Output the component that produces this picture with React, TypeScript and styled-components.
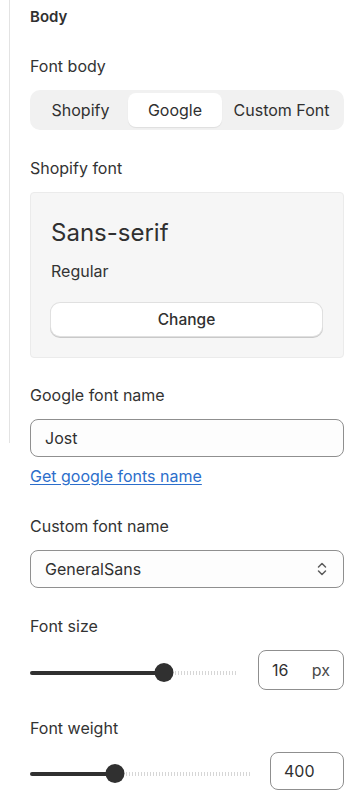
import React from 'react';
import styled, { createGlobalStyle } from 'styled-components';

const GlobalStyle = createGlobalStyle`
  * { box-sizing: border-box; }
  body {
    margin: 0;
    background: #ffffff;
    font-family: Inter, "Noto Sans", sans-serif;
    color: #303030;
  }
`;

const Page = styled.div`
  position: relative;
  width: 360px;
  min-height: 803px;
  padding: 6px 16px 0 30px;
  display: flex;
  flex-direction: column;

  &::before {
    content: '';
    position: absolute;
    left: 9px;
    top: 0;
    height: 443px;
    width: 1px;
    background: #e3e3e3;
  }
`;

const SectionTitle = styled.h2`
  margin: 0 0 27px;
  font-size: 15px;
  font-weight: 600;
  line-height: 22px;
  color: #303030;
`;

const Field = styled.div<{ $gap?: number }>`
  display: flex;
  flex-direction: column;
  margin-bottom: ${(p) => p.$gap ?? 26}px;
`;

const Label = styled.div`
  font-size: 16px;
  line-height: 22px;
  color: #333333;
  margin-bottom: 13px;
`;

const Segmented = styled.div`
  display: flex;
  background: #f1f1f1;
  border-radius: 10px;
  padding: 3px;
  height: 40px;
`;

const Segment = styled.div<{ $active?: boolean; $w: number }>`
  width: ${(p) => p.$w}px;
  display: flex;
  align-items: center;
  justify-content: center;
  font-size: 16px;
  color: #303030;
  border-radius: 8px;
  background: ${(p) => (p.$active ? '#ffffff' : 'transparent')};
  box-shadow: ${(p) => (p.$active ? '0 1px 1px rgba(0,0,0,0.08)' : 'none')};
`;

const FontCard = styled.div`
  background: #f6f6f6;
  border: 1px solid #ebebeb;
  border-radius: 4px;
  padding: 22px 21px 21px 20px;
  display: flex;
  flex-direction: column;
`;

const FontName = styled.div`
  font-size: 24px;
  line-height: 36px;
  color: #303030;
  margin-bottom: 9px;
`;

const FontStyle = styled.div`
  font-size: 16px;
  line-height: 22px;
  color: #333333;
  margin-bottom: 21px;
`;

const Button = styled.button`
  height: 33px;
  border: none;
  border-radius: 9px;
  background: #ffffff;
  font-family: inherit;
  font-size: 15.5px;
  font-weight: 500;
  color: #303030;
  box-shadow: 0 0 0 1px #e0e0e0, 0 1px 0 1px #c9c9c9;
`;

const TextBox = styled.div`
  height: 38px;
  border: 1px solid #8f8f8f;
  border-radius: 8px;
  padding: 0 14px;
  display: flex;
  align-items: center;
  justify-content: space-between;
  font-size: 16px;
  color: #303030;
  background: #fdfdfd;
`;

const HelpLink = styled.a`
  margin-top: 8px;
  font-size: 16px;
  line-height: 22px;
  color: #2c6ecb;
  text-decoration: underline;
  text-underline-offset: 2px;
`;

const SliderRow = styled.div`
  display: flex;
  align-items: center;
  justify-content: space-between;
`;

const Track = styled.div<{ $w: number }>`
  position: relative;
  width: ${(p) => p.$w}px;
  height: 20px;
  margin-top: 5px;
`;

const Filled = styled.div`
  position: absolute;
  left: 0;
  top: 8px;
  height: 4px;
  border-radius: 2px;
  background: #303030;
`;

const Rest = styled.div`
  position: absolute;
  right: 0;
  top: 8px;
  height: 4px;
  background: repeating-linear-gradient(
    to right,
    #d6d6d6 0,
    #d6d6d6 1px,
    transparent 1px,
    transparent 3px
  );
`;

const Thumb = styled.div`
  position: absolute;
  top: 0;
  width: 19px;
  height: 19px;
  border-radius: 50%;
  background: #303030;
  transform: translateX(-50%);
`;

const NumberBox = styled.div<{ $w: number; $h: number }>`
  width: ${(p) => p.$w}px;
  height: ${(p) => p.$h}px;
  border: 1px solid #8f8f8f;
  border-radius: 8px;
  padding: 0 13px;
  display: flex;
  align-items: center;
  justify-content: space-between;
  font-size: 16px;
  color: #303030;
`;

const Unit = styled.span`
  color: #4a4a4a;
`;

const Slider: React.FC<{ width: number; pos: number }> = ({ width, pos }) => (
  <Track $w={width}>
    <Rest style={{ left: pos + 8 }} />
    <Filled style={{ width: pos }} />
    <Thumb style={{ left: pos }} />
  </Track>
);

const ChevronUpDown = () => (
  <svg width="14" height="16" viewBox="0 0 14 16" fill="none">
    <path d="M3.5 6 L7 2.5 L10.5 6" stroke="#5c5c5c" strokeWidth="1.5" strokeLinecap="round" strokeLinejoin="round" />
    <path d="M3.5 10 L7 13.5 L10.5 10" stroke="#5c5c5c" strokeWidth="1.5" strokeLinecap="round" strokeLinejoin="round" />
  </svg>
);

const App: React.FC = () => {
  return (
    <>
      <GlobalStyle />
      <Page>
        <SectionTitle>Body</SectionTitle>

        <Field $gap={27}>
          <Label>Font body</Label>
          <Segmented>
            <Segment $w={95}>Shopify</Segment>
            <Segment $w={94} $active>Google</Segment>
            <Segment $w={119}>Custom Font</Segment>
          </Segmented>
        </Field>

        <Field $gap={26}>
          <Label>Shopify font</Label>
          <FontCard>
            <FontName>Sans-serif</FontName>
            <FontStyle>Regular</FontStyle>
            <Button>Change</Button>
          </FontCard>
        </Field>

        <Field $gap={28}>
          <Label>Google font name</Label>
          <TextBox>Jost</TextBox>
          <HelpLink href="#">Get google fonts name</HelpLink>
        </Field>

        <Field $gap={27}>
          <Label>Custom font name</Label>
          <TextBox>
            GeneralSans
            <ChevronUpDown />
          </TextBox>
        </Field>

        <Field $gap={27}>
          <Label>Font size</Label>
          <SliderRow>
            <Slider width={207} pos={134} />
            <NumberBox $w={86} $h={40}>
              16<Unit>px</Unit>
            </NumberBox>
          </SliderRow>
        </Field>

        <Field $gap={0}>
          <Label>Font weight</Label>
          <SliderRow>
            <Slider width={220} pos={85} />
            <NumberBox $w={74} $h={38}>400</NumberBox>
          </SliderRow>
        </Field>
      </Page>
    </>
  );
};

export default App;
